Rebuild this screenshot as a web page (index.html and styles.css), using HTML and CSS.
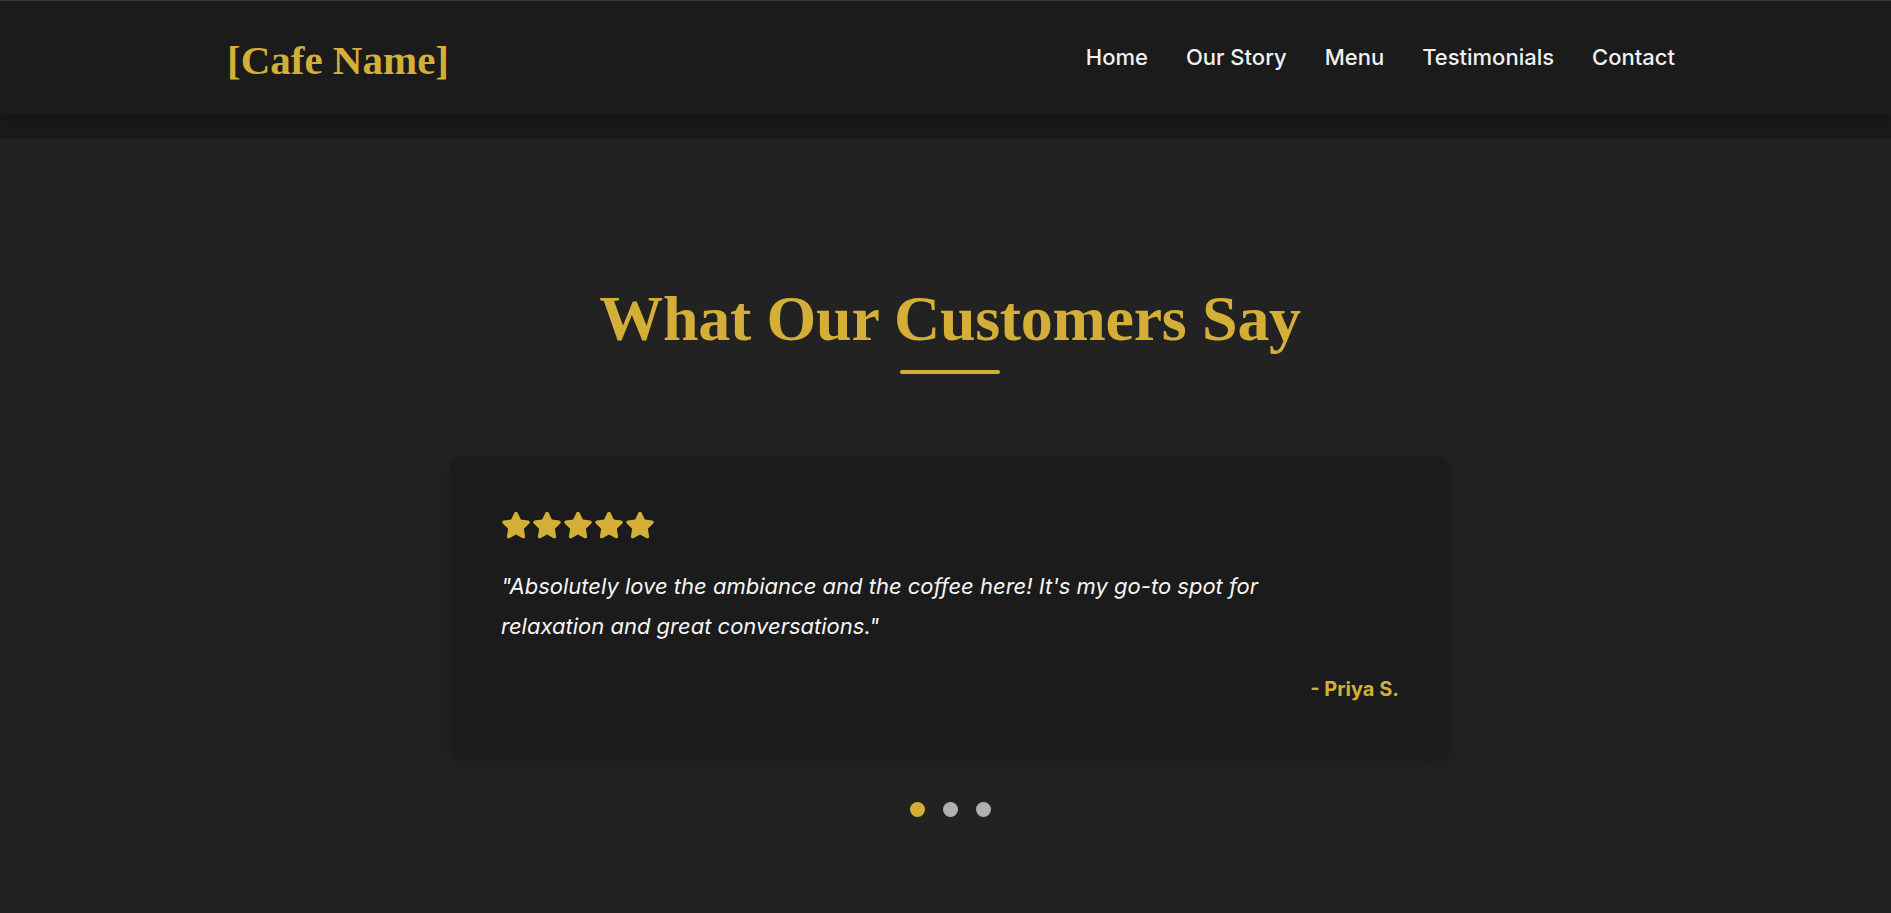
FILE: index.html
```html
<!DOCTYPE html>
<html lang="en">
<head>
<meta charset="utf-8">
<title>[Cafe Name]</title>
<link rel="stylesheet" href="styles.css">
</head>
<body>
<header class="site-header">
  <div class="header-inner">
    <a class="logo" href="#">[Cafe Name]</a>
    <nav class="nav">
      <a href="#">Home</a>
      <a href="#">Our Story</a>
      <a href="#">Menu</a>
      <a href="#">Testimonials</a>
      <a href="#">Contact</a>
    </nav>
  </div>
</header>
<main class="testimonials">
  <h2 class="section-title">What Our Customers Say</h2>
  <div class="title-rule"></div>
  <div class="card">
    <div class="stars">
      <svg viewBox="0 0 576 512"><path d="M316.9 18C311.6 7 300.4 0 288.1 0s-23.4 7-28.8 18L195 150.3 51.4 171.5c-12 1.8-22 10.2-25.7 21.7s-.7 24.2 7.9 32.7L137.8 329 113.2 474.7c-2 12 3 24.2 12.9 31.3s23 8 33.8 2.3l128.3-68.5 128.3 68.5c10.8 5.7 23.9 4.9 33.8-2.3s14.9-19.3 12.9-31.3L438.5 329 542.7 225.9c8.6-8.5 11.7-21.2 7.9-32.7s-13.7-19.9-25.7-21.7L381.2 150.3 316.9 18z"/></svg>
      <svg viewBox="0 0 576 512"><path d="M316.9 18C311.6 7 300.4 0 288.1 0s-23.4 7-28.8 18L195 150.3 51.4 171.5c-12 1.8-22 10.2-25.7 21.7s-.7 24.2 7.9 32.7L137.8 329 113.2 474.7c-2 12 3 24.2 12.9 31.3s23 8 33.8 2.3l128.3-68.5 128.3 68.5c10.8 5.7 23.9 4.9 33.8-2.3s14.9-19.3 12.9-31.3L438.5 329 542.7 225.9c8.6-8.5 11.7-21.2 7.9-32.7s-13.7-19.9-25.7-21.7L381.2 150.3 316.9 18z"/></svg>
      <svg viewBox="0 0 576 512"><path d="M316.9 18C311.6 7 300.4 0 288.1 0s-23.4 7-28.8 18L195 150.3 51.4 171.5c-12 1.8-22 10.2-25.7 21.7s-.7 24.2 7.9 32.7L137.8 329 113.2 474.7c-2 12 3 24.2 12.9 31.3s23 8 33.8 2.3l128.3-68.5 128.3 68.5c10.8 5.7 23.9 4.9 33.8-2.3s14.9-19.3 12.9-31.3L438.5 329 542.7 225.9c8.6-8.5 11.7-21.2 7.9-32.7s-13.7-19.9-25.7-21.7L381.2 150.3 316.9 18z"/></svg>
      <svg viewBox="0 0 576 512"><path d="M316.9 18C311.6 7 300.4 0 288.1 0s-23.4 7-28.8 18L195 150.3 51.4 171.5c-12 1.8-22 10.2-25.7 21.7s-.7 24.2 7.9 32.7L137.8 329 113.2 474.7c-2 12 3 24.2 12.9 31.3s23 8 33.8 2.3l128.3-68.5 128.3 68.5c10.8 5.7 23.9 4.9 33.8-2.3s14.9-19.3 12.9-31.3L438.5 329 542.7 225.9c8.6-8.5 11.7-21.2 7.9-32.7s-13.7-19.9-25.7-21.7L381.2 150.3 316.9 18z"/></svg>
      <svg viewBox="0 0 576 512"><path d="M316.9 18C311.6 7 300.4 0 288.1 0s-23.4 7-28.8 18L195 150.3 51.4 171.5c-12 1.8-22 10.2-25.7 21.7s-.7 24.2 7.9 32.7L137.8 329 113.2 474.7c-2 12 3 24.2 12.9 31.3s23 8 33.8 2.3l128.3-68.5 128.3 68.5c10.8 5.7 23.9 4.9 33.8-2.3s14.9-19.3 12.9-31.3L438.5 329 542.7 225.9c8.6-8.5 11.7-21.2 7.9-32.7s-13.7-19.9-25.7-21.7L381.2 150.3 316.9 18z"/></svg>
    </div>
    <p class="quote">"Absolutely love the ambiance and the coffee here! It's my go-to spot for relaxation and great conversations."</p>
    <p class="author">- Priya S.</p>
  </div>
  <div class="dots">
    <span class="dot active"></span>
    <span class="dot"></span>
    <span class="dot"></span>
  </div>
</main>
</body>
</html>
```
FILE: styles.css
```css
* { box-sizing: border-box; }
html, body { margin: 0; padding: 0; }
body {
  background: #1a1a1a;
  font-family: Inter, "Liberation Sans", sans-serif;
  color: #f0f0f0;
  min-height: 913px;
}
.site-header {
  background: #1b1b1b;
  border-top: 1px solid #3a3a3a;
  height: 115px;
  box-shadow: 0 3px 12px rgba(0, 0, 0, 0.35);
  position: relative;
  z-index: 2;
}
.header-inner {
  height: 100%;
  display: flex;
  align-items: center;
  justify-content: space-between;
  padding: 0 216px 0 227px;
}
.logo {
  font-family: "Liberation Serif", serif;
  font-weight: 700;
  font-size: 41px;
  color: #d4af37;
  text-decoration: none;
  margin-top: 3px;
}
.nav {
  display: flex;
  gap: 38px;
  margin-top: -2px;
}
.nav a {
  color: #f0f0f0;
  text-decoration: none;
  font-size: 22px;
  font-weight: 500;
}
.testimonials {
  margin-top: 24px;
  background: #222222;
  min-height: 774px;
  padding: 142px 0 0 9px;
  display: flex;
  flex-direction: column;
  align-items: center;
}
.section-title {
  margin: 0;
  font-family: "Liberation Serif", serif;
  font-weight: 700;
  font-size: 64px;
  letter-spacing: -0.3px;
  line-height: 1.2;
  color: #d4af37;
}
.title-rule {
  width: 100px;
  height: 4px;
  border-radius: 2px;
  background: #d4af37;
  margin-top: 12px;
}
.card {
  width: 998px;
  margin-top: 82px;
  background: #1b1b1b;
  border-radius: 10px;
  box-shadow: 0 6px 18px rgba(0, 0, 0, 0.3);
  padding: 55px 50px 52px;
}
.stars {
  display: flex;
  gap: 1px;
  height: 28px;
}
.stars svg {
  width: 30px;
  height: 28px;
  fill: #d4af37;
}
.quote {
  margin: 27px 0 0;
  font-size: 22px;
  font-style: italic;
  line-height: 40px;
  color: #f5f5f5;
  max-width: 860px;
}
.author {
  margin: 30px 0 0;
  text-align: right;
  font-size: 20px;
  font-weight: 700;
  line-height: 27px;
  color: #d4af37;
}
.dots {
  display: flex;
  gap: 18px;
  margin-top: 47px;
}
.dot {
  width: 15px;
  height: 15px;
  border-radius: 50%;
  background: #b0b0b0;
}
.dot.active { background: #d4af37; }
```
